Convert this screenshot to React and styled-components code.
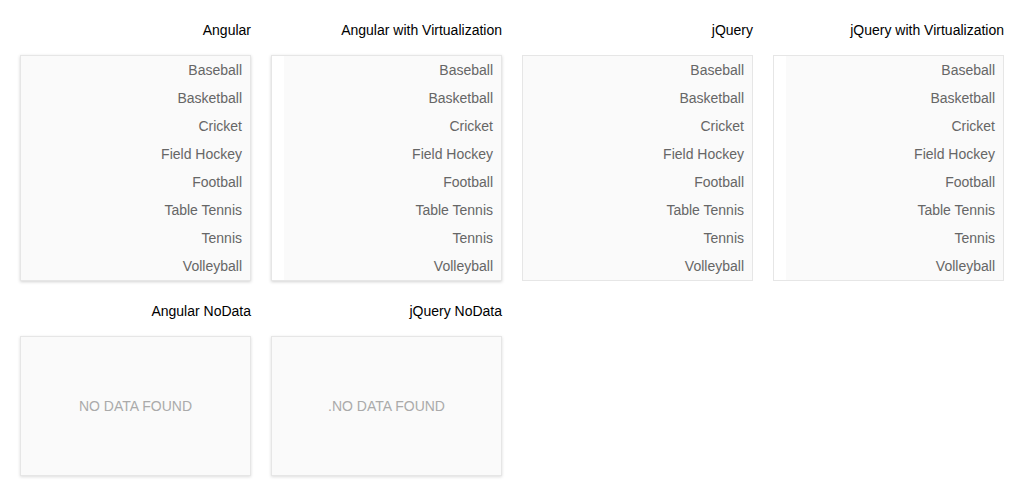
import React from 'react';
import styled, { createGlobalStyle } from 'styled-components';

const sports = ['Baseball', 'Basketball', 'Cricket', 'Field Hockey', 'Football', 'Table Tennis', 'Tennis', 'Volleyball'];

const lists = [
	{ title: 'Angular', raised: true, gutter: false },
	{ title: 'Angular with Virtualization', raised: true, gutter: true },
	{ title: 'jQuery', raised: false, gutter: false },
	{ title: 'jQuery with Virtualization', raised: false, gutter: true },
];

const empties = [
	{ title: 'Angular NoData', text: 'NO DATA FOUND' },
	{ title: 'jQuery NoData', text: '.NO DATA FOUND' },
];

export default function App() {
	return (
		<>
			<GlobalStyle />
			<Page>
				<Grid>
					{lists.map((l) => (
						<Column key={l.title}>
							<Title>{l.title}</Title>
							<Card $raised={l.raised} $gutter={l.gutter}>
								<List>
									{sports.map((s) => (
										<Item key={s}>{s}</Item>
									))}
								</List>
							</Card>
						</Column>
					))}
				</Grid>
				<Grid>
					{empties.map((e) => (
						<Column key={e.title}>
							<Title>{e.title}</Title>
							<EmptyCard>{e.text}</EmptyCard>
						</Column>
					))}
				</Grid>
			</Page>
		</>
	);
}

//styled components
const GlobalStyle = createGlobalStyle`
	body {
		margin: 0;
		background: #fff;
		font-family: 'Liberation Sans', Arial, sans-serif;
	}
`;

const Page = styled.div`
	padding: 20px;
	display: flex;
	flex-direction: column;
	gap: 20px;
`;

const Grid = styled.div`
	display: grid;
	grid-template-columns: repeat(4, 231px);
	column-gap: 20px;
`;

const Column = styled.div`
	display: flex;
	flex-direction: column;
`;

const Title = styled.div`
	font-size: 14px;
	line-height: 20px;
	color: #000;
	text-align: right;
	margin-bottom: 15px;
`;

const Card = styled.div`
	box-sizing: border-box;
	border: 1px solid #e6e6e6;
	background: #fff;
	padding-left: ${(p) => (p.$gutter ? '12px' : '0')};
	box-shadow: ${(p) => (p.$raised ? '0 1px 3px rgba(0, 0, 0, 0.18)' : 'none')};
`;

const List = styled.ul`
	list-style: none;
	margin: 0;
	padding: 0;
	background: #fafafa;
`;

const Item = styled.li`
	height: 28px;
	line-height: 28px;
	padding-right: 8px;
	text-align: right;
	font-size: 14px;
	color: #666;
`;

const EmptyCard = styled.div`
	box-sizing: border-box;
	height: 140px;
	border: 1px solid #e6e6e6;
	background: #fafafa;
	box-shadow: 0 1px 3px rgba(0, 0, 0, 0.14);
	display: flex;
	align-items: center;
	justify-content: center;
	font-size: 14px;
	color: #aaa;
`;
